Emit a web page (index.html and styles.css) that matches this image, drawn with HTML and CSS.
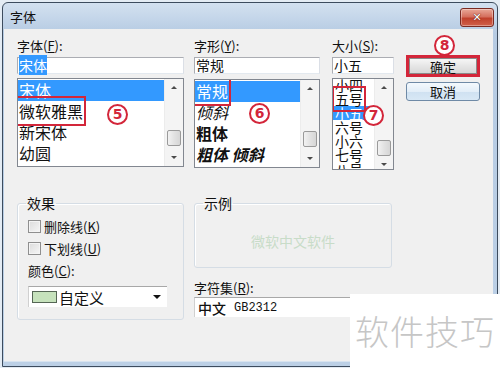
FILE: index.html
```html
<!DOCTYPE html>
<html lang="zh">
<head>
<meta charset="utf-8">
<link rel="stylesheet" href="styles.css">
</head>
<body>
<div class="window">
  <div class="titlebar">
    <span class="title">字体</span>
    <div class="close"><span>✕</span></div>
  </div>
  <div class="client">
    <div class="top">
      <div class="col col-font">
        <div class="lbl">字体(<u>F</u>):</div>
        <div class="input"><span class="sel">宋体</span></div>
        <div class="list list-font">
          <div class="items">
            <div class="item hl">宋体</div>
            <div class="item"><span class="mark">微软雅黑</span></div>
            <div class="item">新宋体</div>
            <div class="item">幼圆</div>
          </div>
          <div class="sb"><div class="arr up"></div><div class="track"><div class="thumb t1"></div></div><div class="arr down"></div></div>
        </div>
        <div class="num n5">5</div>
      </div>
      <div class="col col-style">
        <div class="lbl">字形(<u>Y</u>):</div>
        <div class="input">常规</div>
        <div class="list list-style">
          <div class="items">
            <div class="item hl"><span class="mark">常规</span></div>
            <div class="item it">倾斜</div>
            <div class="item bd">粗体</div>
            <div class="item bd it">粗体 倾斜</div>
          </div>
          <div class="sb"><div class="arr up"></div><div class="track"><div class="thumb t1"></div></div><div class="arr down"></div></div>
        </div>
        <div class="num n6">6</div>
      </div>
      <div class="col col-size">
        <div class="lbl">大小(<u>S</u>):</div>
        <div class="input">小五</div>
        <div class="list list-size">
          <div class="items small">
            <div class="sitem">小四</div>
            <div class="sitem"><span class="mark">五号</span></div>
            <div class="sitem hl">小五</div>
            <div class="sitem">六号</div>
            <div class="sitem">小六</div>
            <div class="sitem">七号</div>
            <div class="sitem">八号</div>
          </div>
          <div class="sb"><div class="arr up"></div><div class="track"><div class="thumb t2"></div></div><div class="arr down"></div></div>
        </div>
        <div class="num n7">7</div>
      </div>
      <div class="col col-btns">
        <div class="okwrap"><div class="btn ok">确定</div></div>
        <div class="btn cancel">取消</div>
        <div class="num n8">8</div>
      </div>
    </div>
    <div class="bottom">
      <fieldset class="group effects">
        <legend>效果</legend>
        <div class="chk"><span class="box"></span>删除线(<u>K</u>)</div>
        <div class="chk"><span class="box"></span>下划线(<u>U</u>)</div>
        <div class="clbl">颜色(<u>C</u>):</div>
        <div class="combo color">
          <span class="swatch"></span><span class="ctext">自定义</span><span class="drop"></span>
        </div>
      </fieldset>
      <div class="rightcol">
        <fieldset class="group sample">
          <legend>示例</legend>
          <div class="sampletext">微软中文软件</div>
        </fieldset>
        <div class="lbl2">字符集(<u>R</u>):</div>
        <div class="combo charset"><span class="cn">中文</span><span class="mono">GB2312</span></div>
      </div>
    </div>
  </div>
</div>
<div class="watermark">软件技巧</div>
</body>
</html>
```
FILE: styles.css
```css
html, body {
  margin: 0;
  padding: 0;
}
body {
  width: 500px;
  height: 368px;
  overflow: hidden;
  background: #e4ecf4;
  font-family: "Noto Sans CJK SC", "Noto Sans", sans-serif;
  color: #111;
  position: relative;
}
u { text-decoration: underline; }

.window {
  margin: 2px 0 0 2px;
  width: 496px;
  height: 365px;
  box-sizing: border-box;
  border: 1px solid #3d4c5e;
  border-radius: 6px 6px 0 0;
  background: linear-gradient(#d3e1f0, #b6cbe3 30px, #bcd0e6);
  display: flex;
  flex-direction: column;
}
.titlebar {
  height: 26px;
  flex: none;
  display: flex;
  align-items: center;
  justify-content: space-between;
  padding: 0 3px 0 7px;
}
.title {
  font-size: 13px;
  color: #111;
  margin-top: 1px;
}
.close {
  width: 32px;
  height: 17px;
  margin-top: 3px;
  border: 1px solid #7a2a22;
  border-radius: 3px;
  background: linear-gradient(#e9a898, #d5705e 45%, #c0412c 55%, #d0604a);
  display: flex;
  align-items: center;
  justify-content: center;
  box-shadow: inset 0 0 0 1px rgba(255,255,255,0.35);
}
.close span {
  color: #fff;
  font-family: "DejaVu Sans", sans-serif;
  font-weight: bold;
  font-size: 11px;
  line-height: 1;
  text-shadow: 0 0 1px #5a1a10, 0 0 1px #5a1a10;
}

.client {
  flex: 1;
  margin: 0 4px 4px 1px;
  background: #f0f0f0;
  padding: 8px 0 0 13px;
  position: relative;
  border-bottom: 1px solid #d8e4f0;
}

.top {
  display: flex;
  align-items: flex-start;
}
.col {
  position: relative;
  flex: none;
}
.col-font { width: 167px; }
.col-style { width: 126px; margin-left: 10px; }
.col-size { width: 62px; margin-left: 12px; }
.col-btns { width: 74px; margin-left: 12px; padding-top: 18px; }

.lbl {
  font-size: 13px;
  line-height: 18px;
  height: 18px;
  margin-bottom: 2px;
}
.input {
  height: 17px;
  box-sizing: border-box;
  border: 1px solid #abadb3;
  border-bottom-color: #e3e9ef;
  border-right-color: #dbdfe6;
  background: #fff;
  font-size: 14px;
  line-height: 15px;
  padding-left: 1px;
  white-space: nowrap;
}
.sel {
  background: #3399ff;
  color: #fff;
}
.list {
  margin-top: 4px;
  box-sizing: border-box;
  border: 1px solid #828790;
  background: #fff;
  display: flex;
  overflow: hidden;
}
.list-font { height: 89px; }
.list-style { height: 89px; margin-top: 5px; }
.list-size { height: 92px; }

.items {
  flex: 1;
  min-width: 0;
  padding-top: 1px;
}
.item {
  height: 21px;
  line-height: 21px;
  font-size: 16px;
  padding-left: 1px;
  white-space: nowrap;
}
.item.hl, .sitem.hl {
  background: #3399ff;
  color: #fff;
}
.it { font-style: italic; }
.bd { font-weight: bold; }
.small { padding-top: 0; margin-top: -1px; }
.sitem {
  height: 14px;
  line-height: 14px;
  font-size: 14px;
  white-space: nowrap;
  padding-left: 2px;
}
.mark {
  outline: 2px solid #d3263a;
  outline-offset: 1px;
}

.sb {
  width: 18px;
  flex: none;
  background: #f4f4f4;
  border-left: 1px solid #ececec;
  display: flex;
  flex-direction: column;
}
.arr {
  height: 17px;
  flex: none;
  position: relative;
}
.arr::after {
  content: "";
  position: absolute;
  left: 6px;
  top: 7px;
  border-left: 3px solid transparent;
  border-right: 3px solid transparent;
}
.arr.up::after { border-bottom: 3px solid #4a4a4a; }
.arr.down::after { border-top: 3px solid #4a4a4a; }
.track { flex: 1; }
.thumb {
  margin: 0 2px 0 2px;
  height: 16px;
  box-sizing: border-box;
  border: 1px solid #9a9a9a;
  border-radius: 2px;
  background: linear-gradient(90deg, #f2f2f2, #e2e2e2 50%, #d6d6d6);
}
.t1 { margin-top: 34px; }
.t2 { margin-top: 44px; }

.okwrap {
  border: 3px solid #d3263a;
  height: 22px;
  box-sizing: border-box;
}
.btn {
  box-sizing: border-box;
  font-size: 13px;
  text-align: center;
  color: #111;
}
.ok {
  height: 16px;
  line-height: 15px;
  border: 1px solid #8a8a8a;
  background: linear-gradient(#f6f6f6, #e6e6e6 50%, #d8d8d8);
}
.cancel {
  margin-top: 5px;
  height: 19px;
  line-height: 17px;
  border: 1px solid #6f8aa6;
  border-radius: 3px;
  background: linear-gradient(#f4f9fd, #e3eef8 50%, #cfe1f1 52%, #d8e8f5);
}

.num {
  position: absolute;
  width: 17px;
  height: 17px;
  border: 2px solid #d3263a;
  border-radius: 50%;
  background: #fff;
  color: #d3263a;
  font-family: "DejaVu Sans", sans-serif;
  font-weight: bold;
  font-size: 14px;
  line-height: 17px;
  text-align: center;
}
.n5 { left: 90px; top: 67px; }
.n6 { left: 55px; top: 66px; }
.n7 { left: 31px; top: 68px; }
.n8 { left: 28px; top: -2px; }

.bottom {
  display: flex;
  align-items: flex-start;
  margin-top: 25px;
}
.group {
  margin: 0;
  padding: 0;
  border: 1px solid #d5dde5;
  border-radius: 3px;
  box-sizing: border-box;
  min-width: 0;
  box-shadow: inset 1px 1px 0 #fff;
}
.group legend {
  font-size: 14px;
  line-height: 16px;
  padding: 0 1px;
  margin-left: 8px;
}
.effects {
  width: 167px;
  height: 125px;
  padding: 4px 0 0 10px;
}
.effects legend { margin-left: -2px; }
.chk {
  height: 22px;
  display: flex;
  align-items: center;
  font-size: 13px;
}
.chk + .chk { height: 23px; }
.box {
  width: 13px;
  height: 13px;
  box-sizing: border-box;
  border: 1px solid #8f8f8f;
  background: linear-gradient(135deg, #dcdcdc, #f6f6f6);
  box-shadow: inset 0 0 0 1px #f4f4f4;
  margin-right: 3px;
}
.clbl {
  height: 22px;
  line-height: 22px;
  font-size: 13px;
}
.combo {
  box-sizing: border-box;
  background: #fff;
  border-top: 1px solid #a8a8a8;
  border-left: 1px solid #d0d0d0;
}
.color {
  margin-top: 4px;
  width: 139px;
  height: 21px;
  display: flex;
  align-items: center;
  padding-left: 3px;
}
.swatch {
  width: 23px;
  height: 10px;
  border: 1px solid #556655;
  background: #c6e2bc;
  margin-right: 2px;
}
.ctext { font-size: 15px; flex: 1; line-height: 19px; }
.drop {
  margin-right: 6px;
  border-left: 4px solid transparent;
  border-right: 4px solid transparent;
  border-top: 4px solid #111;
}

.rightcol {
  width: 198px;
  margin-left: 10px;
}
.sample {
  height: 73px;
  display: flex;
  flex-direction: column;
}
.sampletext {
  padding-top: 22px;
  text-align: center;
  font-size: 14px;
  line-height: 16px;
  color: #c8dcc8;
}
.lbl2 {
  margin-top: 11px;
  font-size: 13px;
  line-height: 18px;
  height: 18px;
}
.charset {
  height: 20px;
  width: 198px;
  display: flex;
  align-items: center;
  padding-left: 3px;
}
.cn { font-size: 14px; font-weight: 500; margin-right: 8px; }
.mono { font-family: "Liberation Mono", monospace; font-size: 12px; }

.watermark {
  position: absolute;
  left: 350px;
  top: 294px;
  width: 150px;
  height: 74px;
  background: #fff;
  color: #c6c6c6;
  font-size: 34px;
  font-weight: 300;
  line-height: 74px;
  padding-left: 5px;
  box-sizing: border-box;
  white-space: nowrap;
  letter-spacing: 1px;
}
```
